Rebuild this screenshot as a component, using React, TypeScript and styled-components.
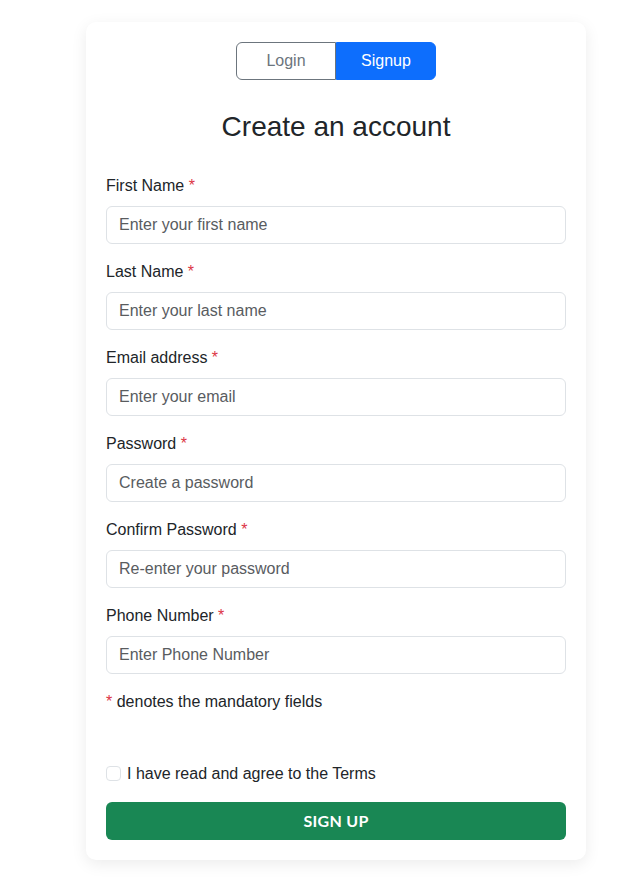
import styled, { createGlobalStyle } from "styled-components";

const GlobalStyle = createGlobalStyle`
  body {
    margin: 0;
    background: #ffffff;
    font-family: "Liberation Sans", Arial, sans-serif;
    color: #212529;
  }
  * { box-sizing: border-box; }
`;

const Page = styled.div`
  display: flex;
  padding: 22px 0 19px 86px;
`;

const Card = styled.form`
  width: 500px;
  background: #fff;
  border-radius: 10px;
  box-shadow: 0 4px 16px rgba(0, 0, 0, 0.08);
  padding: 20px;
  display: flex;
  flex-direction: column;
`;

const Toggle = styled.div`
  display: flex;
  justify-content: center;
`;

const ToggleButton = styled.button<{ $active?: boolean; $side: "left" | "right" }>`
  width: 100px;
  height: 38px;
  font-family: inherit;
  font-size: 16px;
  border: 1px solid ${(p) => (p.$active ? "#0d6efd" : "#6c757d")};
  background: ${(p) => (p.$active ? "#0d6efd" : "#fff")};
  color: ${(p) => (p.$active ? "#fff" : "#6c757d")};
  border-radius: ${(p) => (p.$side === "left" ? "6px 0 0 6px" : "0 6px 6px 0")};
  cursor: pointer;
`;

const Title = styled.h3`
  margin: 30px 0 30px 0;
  font-size: 28px;
  font-weight: 400;
  line-height: 1.2;
  text-align: center;
  color: #212529;
`;

const Field = styled.div`
  display: flex;
  flex-direction: column;
  margin-bottom: 16px;
`;

const Label = styled.label`
  font-size: 16px;
  line-height: 24px;
  margin-bottom: 8px;
`;

const Star = styled.span`
  color: #dc3545;
`;

const Input = styled.input`
  height: 38px;
  padding: 6px 12px;
  font-family: inherit;
  font-size: 16px;
  border: 1px solid #dee2e6;
  border-radius: 6px;
  color: #212529;
  &::placeholder {
    color: #595c5f;
  }
`;

const Note = styled.p`
  margin: 0 0 48px 0;
  font-size: 16px;
  line-height: 24px;
`;

const CheckRow = styled.label`
  display: flex;
  align-items: center;
  gap: 6px;
  font-size: 16px;
  line-height: 24px;
  margin-bottom: 16px;
`;

const Check = styled.input`
  appearance: none;
  width: 15px;
  height: 15px;
  margin: 0;
  border: 1px solid #dee2e6;
  border-radius: 4px;
  background: #fff;
`;

const Submit = styled.button`
  height: 38px;
  border: none;
  border-radius: 6px;
  background: #198754;
  color: #fff;
  font-family: Lato, "Open Sans", sans-serif;
  font-weight: 700;
  font-size: 16px;
  letter-spacing: 0.3px;
  cursor: pointer;
`;

const fields = [
  { label: "First Name", placeholder: "Enter your first name", type: "text" },
  { label: "Last Name", placeholder: "Enter your last name", type: "text" },
  { label: "Email address", placeholder: "Enter your email", type: "email" },
  { label: "Password", placeholder: "Create a password", type: "password" },
  { label: "Confirm Password", placeholder: "Re-enter your password", type: "password" },
  { label: "Phone Number", placeholder: "Enter Phone Number", type: "tel" },
];

export default function App() {
  return (
    <>
      <GlobalStyle />
      <Page>
        <Card onSubmit={(e) => e.preventDefault()}>
          <Toggle>
            <ToggleButton type="button" $side="left">
              Login
            </ToggleButton>
            <ToggleButton type="button" $side="right" $active>
              Signup
            </ToggleButton>
          </Toggle>
          <Title>Create an account</Title>
          {fields.map((f) => (
            <Field key={f.label}>
              <Label>
                {f.label} <Star>*</Star>
              </Label>
              <Input type={f.type} placeholder={f.placeholder} />
            </Field>
          ))}
          <Note>
            <Star>*</Star> denotes the mandatory fields
          </Note>
          <CheckRow>
            <Check type="checkbox" />
            I have read and agree to the Terms
          </CheckRow>
          <Submit type="submit">SIGN UP</Submit>
        </Card>
      </Page>
    </>
  );
}
